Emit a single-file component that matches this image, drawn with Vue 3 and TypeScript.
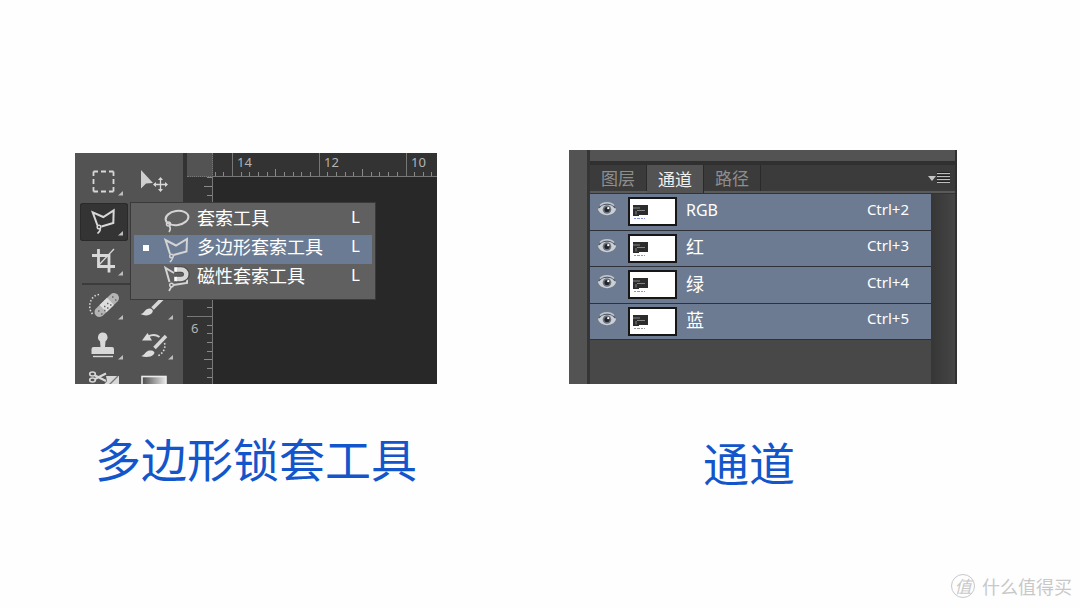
<script setup lang="ts">
import { ref } from 'vue'

type ToolId =
  | 'marquee' | 'move' | 'lasso' | 'wand' | 'crop' | 'eyedropper'
  | 'heal' | 'brush' | 'stamp' | 'history' | 'eraser' | 'gradient'

interface Tool { id: ToolId; name: string; more: boolean }
interface Channel { name: string; key: string; latin: boolean }

const topTools: Tool[] = [
  { id: 'marquee', name: '矩形选框工具', more: true },
  { id: 'move', name: '移动工具', more: false },
  { id: 'lasso', name: '多边形套索工具', more: true },
  { id: 'wand', name: '魔棒工具', more: true },
  { id: 'crop', name: '裁剪工具', more: true },
  { id: 'eyedropper', name: '吸管工具', more: true },
]
const lowTools: Tool[] = [
  { id: 'heal', name: '修复画笔工具', more: true },
  { id: 'brush', name: '画笔工具', more: true },
  { id: 'stamp', name: '仿制图章工具', more: true },
  { id: 'history', name: '历史记录画笔工具', more: true },
  { id: 'eraser', name: '橡皮擦工具', more: false },
  { id: 'gradient', name: '渐变工具', more: false },
]
const toolGroups = [topTools, lowTools]

const lassoTools = ['套索工具', '多边形套索工具', '磁性套索工具']
const picked = ref(1)

const tabs = ['图层', '通道', '路径']
const activeTab = ref(1)

const channels: Channel[] = [
  { name: 'RGB', key: 'Ctrl+2', latin: true },
  { name: '红', key: 'Ctrl+3', latin: false },
  { name: '绿', key: 'Ctrl+4', latin: false },
  { name: '蓝', key: 'Ctrl+5', latin: false },
]

const step = 26 / 3
const rulerMajors = [
  { x: 19, label: '14' },
  { x: 106, label: '12' },
  { x: 193, label: '10' },
]
const hTicks = Array.from({ length: 60 }, (_, i) => i - 2)
  .filter((i) => i % 10 !== 0)
  .map((i) => ({ x: Math.round(19 + i * step), top: Math.abs(i % 10) === 5 ? 16 : 19 }))
const vTicks = Array.from({ length: 24 }, (_, i) => i - 16)
  .filter((i) => i % 10 !== 0)
  .map((i) => ({ y: Math.round(139 + i * step), left: Math.abs(i % 10) === 5 ? 17 : 20 }))
</script>

<template>
  <main class="page">
    <figure class="shot shot-tools">
      <div class="editor">
        <div class="toolbox">
          <div v-for="(group, g) in toolGroups" :key="g" class="tool-group">
            <button
              v-for="tool in group"
              :key="tool.id"
              type="button"
              class="tool"
              :class="{ current: tool.id === 'lasso' }"
              :aria-label="tool.name"
            >
              <svg viewBox="0 0 48 38" width="48" height="38" fill="none" stroke="#d8d8d8" stroke-width="2">
                <rect v-if="tool.id === 'marquee'" x="13.5" y="8.5" width="20" height="20" stroke-width="1.800" stroke-dasharray="4.5 3 5 3 4.5 0" />
                <g v-else-if="tool.id === 'move'">
                  <path d="M11 7V25.500L16 20.500L23 20Z" fill="#cfcfcf" stroke="none" />
                  <path d="M30.500 15.500V27.500M24.500 21.500H36.500" stroke-width="1.300" />
                  <path d="M30.500 14L33 17H28ZM30.500 29L33 26H28ZM23 21.500L26 19V24ZM38 21.500L35 19V24Z" fill="#d8d8d8" stroke="none" />
                </g>
                <g v-else-if="tool.id === 'lasso'">
                  <path d="M17.500 22.500L12.700 9.300L23.300 14L33.700 7.300L33.300 20L21.500 23.500" />
                  <circle cx="19" cy="24" r="1.800" stroke-width="1.500" />
                  <path d="M20 25.500C21 28 19 29 17.500 30.500" stroke-width="1.600" />
                </g>
                <g v-else-if="tool.id === 'crop'">
                  <path d="M12 12.500H29V29.500M18.500 6V23.500H35" stroke-width="2.800" />
                  <path d="M34 6L18 23" stroke-width="1.300" />
                </g>
                <g v-else-if="tool.id === 'heal'">
                  <path d="M12.500 27C9 23 9 17 11.500 12.500C13.500 9 17 7.500 20.500 7.500" stroke-width="1.500" stroke-dasharray="1.500 1.800" />
                  <path d="M19.500 25L34 11" stroke="#b4b4b4" stroke-width="10" stroke-linecap="round" />
                  <path d="M23 21.600L30.500 14.400" stroke="#dedede" stroke-width="10" />
                  <path d="M24 19.500h1.500M27 16.500h1.500M27 21h1.500M30 18h1.500M24 23.500h1.500M18 24h1.500M21 27h1.500M32 10h1.500M35 13h1.500" stroke="#666" stroke-width="1.300" />
                </g>
                <g v-else-if="tool.id === 'brush'">
                  <path d="M10.500 27C14 27 14.500 22 19 21.500C22 21.500 24 23.500 22 26C19.500 29 14 29 10.500 27Z" fill="#dcdcdc" stroke="none" />
                  <path d="M22.500 21.500L35 9" stroke-width="3.500" />
                </g>
                <g v-else-if="tool.id === 'stamp'">
                  <path d="M22.500 5.500A4.800 4.800 0 0 1 25.500 14.200L25 20H32Q34 20 34 22V27H11.500V22Q11.500 20 13.500 20H20.500L20 14.200A4.800 4.800 0 0 1 22.500 5.500Z" fill="#d8d8d8" stroke="none" />
                  <path d="M13 29.500H33" stroke-width="1.400" />
                </g>
                <g v-else-if="tool.id === 'history'">
                  <path d="M12 13.500L17.500 6L22 13.500Z" fill="#dcdcdc" stroke="none" />
                  <path d="M18 9.500C22 7.500 26 7.500 29.500 10" />
                  <path d="M36 9L24.500 21" stroke-width="3.500" />
                  <path d="M11 29C14.500 28.500 15.500 24 19.500 23.500C23 23 26 25 23.500 27.500C20.500 30.500 15 30.500 11 29Z" fill="#dcdcdc" stroke="none" />
                  <path d="M34.500 16C36 20.500 33.500 26.500 27.500 29" stroke-width="1.600" stroke-dasharray="1.600 1.800" />
                </g>
                <g v-else-if="tool.id === 'eraser'">
                  <path d="M26 9H39V22H20L27 14Z" fill="#d8d8d8" stroke="none" />
                  <path d="M38 9L29 18" stroke="#777" stroke-width="1.300" />
                  <ellipse cx="12.500" cy="7" rx="2.800" ry="2" stroke-width="1.600" />
                  <ellipse cx="12.500" cy="13" rx="2.800" ry="2" stroke-width="1.600" />
                  <path d="M15 8.500L26 14M15 12L26 6.500" stroke-width="2.200" />
                </g>
                <g v-else-if="tool.id === 'gradient'">
                  <defs>
                    <linearGradient id="ramp" x1="0" x2="1" y1="0" y2="0">
                      <stop offset="0" stop-color="#4a4a4a" />
                      <stop offset="1" stop-color="#e8e8e8" />
                    </linearGradient>
                  </defs>
                  <rect x="12" y="9.500" width="24" height="18" fill="url(#ramp)" stroke="#ececec" stroke-width="1.600" />
                </g>
                <path v-if="tool.more" d="M43 28V32.500H38Z" fill="#bdbdbd" stroke="none" />
              </svg>
            </button>
          </div>
        </div>

        <div class="document">
          <div class="ruler-corner"></div>
          <div class="ruler-top">
            <svg width="100%" height="24" shape-rendering="crispEdges">
              <rect v-for="m in rulerMajors" :key="m.x" :x="m.x" y="0" width="1" height="24" fill="#777" />
              <rect v-for="t in hTicks" :key="t.x" :x="t.x" :y="t.top" width="1" :height="24 - t.top" fill="#8a8a8a" />
              <text v-for="m in rulerMajors" :key="m.label" :x="m.x + 5" y="14" class="ruler-text">{{ m.label }}</text>
            </svg>
          </div>
          <div class="ruler-side">
            <svg width="26" height="100%" shape-rendering="crispEdges">
              <rect x="0" y="139" width="26" height="1" fill="#777" />
              <rect v-for="t in vTicks" :key="t.y" :x="t.left" :y="t.y" :width="26 - t.left" height="1" fill="#8a8a8a" />
              <text x="4" y="156" class="ruler-text">6</text>
            </svg>
          </div>
          <div class="canvas"></div>
        </div>

        <div class="flyout" role="menu">
          <button
            v-for="(name, i) in lassoTools"
            :key="name"
            type="button"
            role="menuitemradio"
            class="flyout-item"
            :class="{ picked: picked === i }"
            :aria-checked="picked === i"
            @click="picked = i"
          >
            <span class="mark"></span>
            <svg viewBox="0 0 30 28" width="30" height="28" fill="none" stroke="#d4d4d4" stroke-width="2">
              <g v-if="i === 0">
                <ellipse cx="15" cy="11" rx="11.500" ry="7" transform="rotate(-9 15 11)" />
                <circle cx="6.500" cy="17" r="2" stroke-width="1.500" />
                <path d="M7.500 19C9 21.500 8.500 23 7 25" stroke-width="1.600" />
              </g>
              <g v-else-if="i === 1">
                <path d="M8 18L3.500 4L14 9.500L25 3L24.500 15.500L11.500 19" />
                <circle cx="9.500" cy="20" r="1.800" stroke-width="1.500" />
                <path d="M10.500 21.500C11 23.500 9.500 24.500 8 26" stroke-width="1.600" />
              </g>
              <g v-else>
                <path d="M7.500 17L3.500 3L12 8M25 13V18L11.500 20" />
                <path d="M13 4.500H19C26.500 4.500 26.500 14 19 14H13" stroke="#4a4a4a" stroke-width="6.500" />
                <path d="M13.500 4.500H19C26 4.500 26 14 19 14H14" stroke="#d6d6d6" stroke-width="4.500" />
                <path d="M13.500 2.200V6.800M13.500 11.700V16.300" stroke="#fff" stroke-width="2.500" />
                <circle cx="9.500" cy="20" r="1.800" stroke-width="1.500" />
                <path d="M9.500 21.500L7 26" stroke-width="1.600" />
              </g>
            </svg>
            <span class="flyout-name">{{ name }}</span>
            <kbd class="flyout-key">L</kbd>
          </button>
        </div>
      </div>
      <figcaption>多边形锁套工具</figcaption>
    </figure>

    <figure class="shot shot-channels">
      <div class="dock">
        <div class="dock-edge"></div>
        <div class="panel">
          <div class="panel-top"></div>
          <div class="tabbar">
            <div class="tabs" role="tablist">
              <button
                v-for="(tab, i) in tabs"
                :key="tab"
                type="button"
                role="tab"
                class="tab"
                :class="{ active: activeTab === i }"
                :aria-selected="activeTab === i"
                @click="activeTab = i"
              >{{ tab }}</button>
            </div>
            <button type="button" class="panel-menu" aria-label="面板菜单">
              <svg viewBox="0 0 22 12" width="22" height="12">
                <path d="M0 4H8L4 9Z" fill="#c4c4c4" />
                <path d="M9 .5H22M9 3.500H22M9 6.500H22M9 9.500H22" stroke="#222" />
                <path d="M9 1.500H22M9 4.500H22M9 7.500H22M9 10.500H22" stroke="#bdbdbd" />
              </svg>
            </button>
          </div>
          <div class="panel-body">
            <ul class="channels">
              <li v-for="ch in channels" :key="ch.name" class="channel">
                <button type="button" class="eye" :aria-label="'显示 ' + ch.name">
                  <svg viewBox="0 0 20 16" width="20" height="16">
                    <path d="M1 8.500C4 1.500 16 1.500 19 8.500C16 16 4 16 1 8.500Z" fill="#cdd0d3" />
                    <path d="M2 7C5 2 15 2 18 7" fill="none" stroke="#505863" stroke-width="1.200" />
                    <path d="M3 4.500C6 .8 14 .8 17 4.500" fill="none" stroke="#c2c6cc" stroke-width="1.400" />
                    <circle cx="10" cy="8.500" r="4.300" fill="#69727e" />
                    <circle cx="10" cy="8.500" r="2.600" fill="#20262e" />
                    <circle cx="11.200" cy="7.200" r="1.100" fill="#fff" />
                  </svg>
                </button>
                <svg class="thumb" viewBox="0 0 49 29" width="49" height="29">
                  <rect x="1" y="1" width="47" height="27" fill="#fff" stroke="#161616" stroke-width="2" />
                  <path d="M5 8H20V18H11V19H5Z" fill="#2c2c2c" />
                  <path d="M5 11H12M9 13.500H17M8 17.500V14" stroke="#858585" />
                  <path d="M6 21.500H17" :stroke="ch.latin ? '#8494dc' : '#999'" stroke-dasharray="2 1 3 1" />
                </svg>
                <span class="channel-name" :class="{ latin: ch.latin }">{{ ch.name }}</span>
                <kbd class="shortcut">{{ ch.key }}</kbd>
              </li>
            </ul>
            <div class="scrollbar"></div>
          </div>
        </div>
      </div>
      <figcaption>通道</figcaption>
    </figure>

    <footer class="brand">
      <span class="brand-logo">值</span>
      <span class="brand-name">什么值得买</span>
    </footer>
  </main>
</template>

<style>
body {
  margin: 0;
  background: #fefefe;
}
</style>

<style scoped>
.page {
  box-sizing: border-box;
  min-height: 100vh;
  display: grid;
  grid-template-columns: 362fr 388fr;
  grid-template-rows: 1fr auto;
  column-gap: 132px;
  align-items: start;
  padding: 150px 123px 9px 75px;
  font-family: "Noto Sans", "Noto Sans CJK SC", sans-serif;
}
button {
  margin: 0;
  padding: 0;
  border: 0;
  background: none;
  color: inherit;
  font: inherit;
}
svg {
  display: block;
}
kbd {
  font: inherit;
}
.shot {
  margin: 0;
  min-width: 0;
}
.shot-tools {
  padding-top: 3px;
}
figcaption {
  color: #1356cb;
  font-family: "Noto Sans CJK SC", sans-serif;
  font-size: 46px;
  line-height: 60px;
  text-align: center;
}
.shot-tools figcaption {
  margin-top: 43px;
}
.shot-channels figcaption {
  margin-top: 47px;
  padding-right: 28px;
}

/* editor */
.editor {
  position: relative;
  display: flex;
  height: 231px;
}
.toolbox {
  flex: none;
  box-sizing: border-box;
  width: 112px;
  padding: 10px 0 0 5px;
  background: #535353;
  border-right: 4px solid #333;
  overflow: hidden;
}
.tool-group {
  display: grid;
  grid-template-columns: 50px 50px;
  grid-auto-rows: 40px;
}
.tool-group + .tool-group {
  margin-left: 2px;
  border-top: 2px solid #3c3c3c;
  padding-top: 2px;
}
.tool-group + .tool-group .tool {
  margin-left: -2px;
}
.tool {
  width: 48px;
  height: 38px;
}
.tool.current {
  background: #343434;
  border-radius: 3px;
  box-shadow: inset 0 0 0 1px #2a2a2a;
}
.document {
  flex: 1;
  min-width: 0;
  display: grid;
  grid-template-columns: 26px 1fr;
  grid-template-rows: 24px 1fr;
  overflow: hidden;
}
.ruler-corner {
  background: #535353;
  border-right: 1px dotted #777;
  border-bottom: 1px dotted #777;
}
.ruler-top {
  min-width: 0;
  overflow: hidden;
  background: #333;
  border-bottom: 1px solid #777;
}
.ruler-side {
  min-height: 0;
  overflow: hidden;
  background: #333;
  border-right: 1px solid #777;
}
.ruler-text {
  fill: #b4b4b4;
  font-size: 13px;
}
.canvas {
  background: #282828;
}
.flyout {
  position: absolute;
  left: 55px;
  top: 49px;
  box-sizing: border-box;
  width: 246px;
  padding: 3px 3px 6px;
  background: #606060;
  border: 1px solid #3a3a3a;
}
.flyout-item {
  display: grid;
  grid-template-columns: 28px 35px 1fr auto;
  align-items: center;
  width: 100%;
  height: 29px;
  padding-right: 12px;
  color: #fff;
  font-size: 18px;
  line-height: 20px;
  text-align: left;
}
.flyout-item.picked {
  background: #6b7b93;
}
.mark {
  width: 6px;
  height: 6px;
  margin: 0 0 4px 9px;
}
.picked .mark {
  background: #fff;
}
.flyout-name {
  padding-bottom: 8px;
  font-family: "Noto Sans CJK SC", sans-serif;
}
.flyout-key {
  padding-bottom: 8px;
  font-size: 17px;
}

/* channels panel */
.dock {
  display: flex;
  height: 234px;
  background: #484848;
}
.dock-edge {
  flex: none;
  width: 18px;
  background: #535353;
}
.panel {
  flex: 1;
  min-width: 0;
  display: flex;
  flex-direction: column;
  border-left: 3px solid #353535;
  border-right: 2px solid #303030;
}
.panel-top {
  height: 11px;
  background: #535353;
  border-bottom: 4px solid #303030;
}
.tabbar {
  display: flex;
  justify-content: space-between;
  align-items: center;
  height: 26px;
  background: #3b3b3b;
  border-bottom: 2px solid #5a5a5a;
}
.tabs {
  display: flex;
  height: 100%;
}
.tab {
  box-sizing: border-box;
  width: 57px;
  height: 26px;
  border-right: 1px solid #2a2a2a;
  color: #8e8e8e;
  font-family: "Noto Sans CJK SC", sans-serif;
  font-size: 17px;
  line-height: 26px;
}
.tab.active {
  height: 28px;
  background: #535353;
  color: #f0f0f0;
}
.panel-menu {
  margin-right: 5px;
}
.panel-body {
  flex: 1;
  display: flex;
  border-top: 1px solid #333;
}
.channels {
  flex: 1;
  display: grid;
  grid-auto-rows: 1fr;
  align-self: start;
  height: 146px;
  margin: 0;
  padding: 0;
  list-style: none;
}
.channel {
  display: grid;
  grid-template-columns: 38px 58px 1fr auto;
  align-items: center;
  padding-right: 22px;
  background: #6c7b91;
  border-bottom: 1px solid #2e3238;
  color: #fff;
}
.eye {
  width: 20px;
  height: 16px;
  margin: 0 0 5px 7px;
}
.channel-name {
  margin-bottom: 4px;
  font-family: "Noto Sans CJK SC", sans-serif;
  font-size: 18px;
  line-height: 30px;
}
.channel-name.latin {
  font-family: "Noto Sans", sans-serif;
  font-size: 16px;
}
.shortcut {
  margin-bottom: 6px;
  font-size: 15px;
  line-height: 20px;
}
.scrollbar {
  flex: none;
  width: 24px;
  background: linear-gradient(90deg, #363636, #454545);
}

/* site mark */
.brand {
  grid-column: 1 / -1;
  justify-self: end;
  display: flex;
  align-items: center;
  gap: 7px;
  margin-right: -115px;
  color: #c8c8c8;
  font-family: "Noto Sans CJK SC", sans-serif;
  font-size: 18px;
  line-height: 26px;
}
.brand-logo {
  box-sizing: border-box;
  width: 24px;
  height: 24px;
  border: 1px solid #c8c8c8;
  border-radius: 50%;
  font-size: 17px;
  font-style: italic;
  line-height: 21px;
  text-align: center;
}
</style>
